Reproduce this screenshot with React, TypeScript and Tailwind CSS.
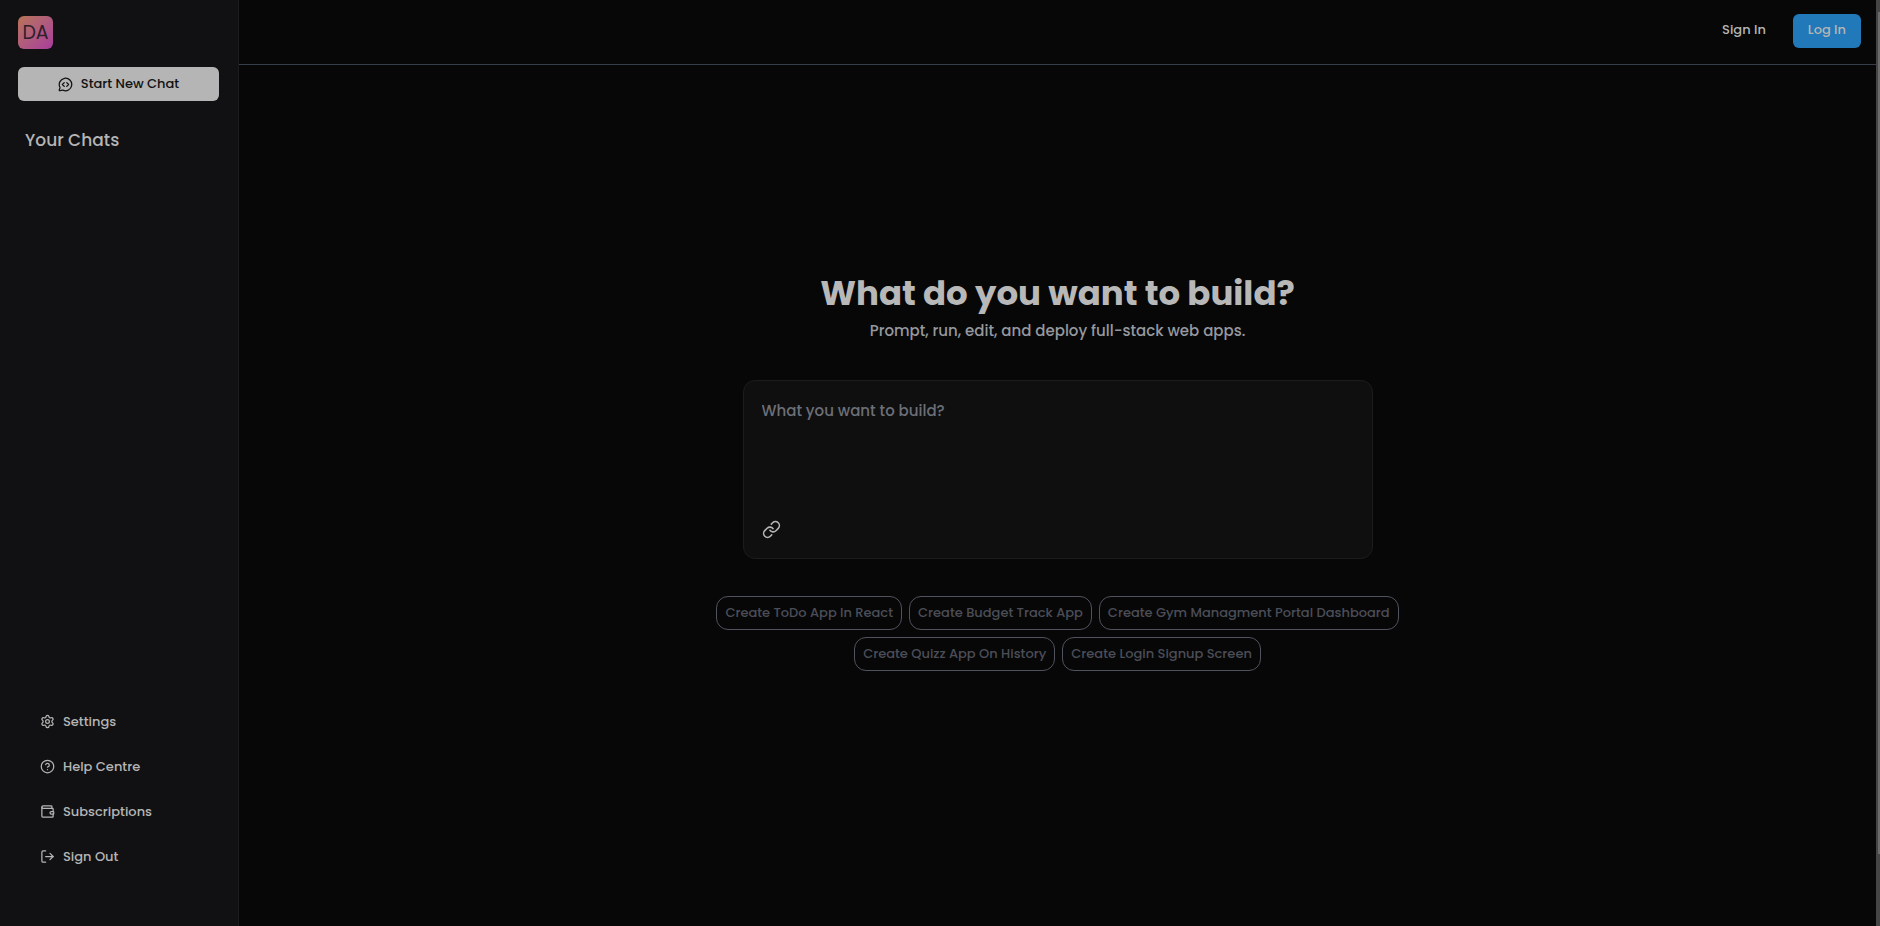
import { useState } from "react";
import { CircleHelp, Link, LogOut, MessageCircleCode, Settings, Wallet } from "lucide-react";

const suggestions = [
  "Create ToDo App In React",
  "Create Budget Track App",
  "Create Gym Managment Portal Dashboard",
  "Create Quizz App On History",
  "Create Login Signup Screen",
];

const links = [
  { label: "Settings", Icon: Settings },
  { label: "Help Centre", Icon: CircleHelp },
  { label: "Subscriptions", Icon: Wallet },
  { label: "Sign Out", Icon: LogOut },
];

export default function App() {
  const [prompt, setPrompt] = useState("");
  return (
    <div className="flex min-h-screen bg-[#070707] font-['Poppins','Open_Sans',sans-serif] text-[13px] font-medium text-[#b5b5b5]">
      <aside className="flex w-[239px] shrink-0 flex-col border-r border-[#1c1c1e] bg-[#111113] pt-4 pr-[19px] pb-[47px] pl-[18px]">
        <div className="flex h-[33px] w-[35px] items-center justify-center rounded-md bg-linear-to-br from-[#b87354] to-[#a93a9c] pt-0.5 text-[19px] font-normal text-[#31202b]">
          DA
        </div>
        <button className="mt-[18px] flex h-[34px] items-center justify-center gap-2 rounded-md bg-[#b5b5b5] text-[#111113]">
          <MessageCircleCode className="size-[15px]" />
          Start New Chat
        </button>
        <h2 className="mt-[25px] px-[7px] text-[17px] leading-7">Your Chats</h2>
        <nav className="mt-auto flex flex-col">
          {links.map(({ label, Icon }) => (
            <a key={label} href="#" className="flex h-[45px] items-center gap-2 px-[22px]">
              <Icon className="size-[15px]" />
              {label}
            </a>
          ))}
        </nav>
      </aside>
      <div className="flex min-w-0 grow flex-col">
        <header className="flex h-[65px] items-start justify-end gap-3 border-b border-[#363e48] px-[15px] pt-[14px]">
          <button className="h-[34px] rounded-md px-[15px] pb-[3px]">Sign In</button>
          <button className="h-[34px] rounded-md bg-[#2179b9] px-[15px] pb-[3px]">Log In</button>
        </header>
        <main className="flex flex-col items-center px-4 pt-[208px]">
          <h1 className="text-[34px] font-bold leading-10 text-[#b8b8b8]">What do you want to build?</h1>
          <p className="mt-[6px] text-[15px] leading-6 text-[#95989e]">
            Prompt, run, edit, and deploy full-stack web apps.
          </p>
          <form className="mt-[37px] flex w-full max-w-[630px] flex-col rounded-xl border border-[#1c1c1c] bg-[#0f0f0f] px-[18px] pt-[18px] pb-[19px]">
            <textarea
              aria-label="What you want to build?"
              placeholder="What you want to build?"
              value={prompt}
              onChange={(e) => setPrompt(e.target.value)}
              className="h-[121px] resize-none bg-transparent text-[15px] leading-6 outline-none placeholder:text-[#6c6f78]"
            />
            <button type="button" aria-label="Attach link" className="self-start">
              <Link className="size-[19px]" />
            </button>
          </form>
          <div className="mt-[37px] flex max-w-[700px] flex-wrap justify-center gap-[7px]">
            {suggestions.map((s) => (
              <button key={s} className="h-[34px] rounded-xl border border-[#50535e] px-2 text-[#4b4e58]">
                {s}
              </button>
            ))}
          </div>
        </main>
      </div>
      <div className="flex w-1 shrink-0 flex-col items-end bg-[#454545] pt-3" aria-hidden="true">
        <div className="h-[842px] w-0.5 bg-[#6b6b6b]" />
      </div>
    </div>
  );
}
